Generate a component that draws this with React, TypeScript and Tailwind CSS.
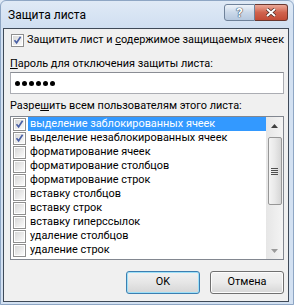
import React from "react";

const items = [
  { t: "выделение заблокированных ячеек", c: true, sel: true },
  { t: "выделение незаблокированных ячеек", c: true },
  { t: "форматирование ячеек" },
  { t: "форматирование столбцов" },
  { t: "форматирование строк" },
  { t: "вставку столбцов" },
  { t: "вставку строк" },
  { t: "вставку гиперссылок" },
  { t: "удаление столбцов" },
  { t: "удаление строк" },
];

function Check({ checked }: { checked?: boolean }) {
  return (
    <div className="w-[13px] h-[13px] border border-[#8f8f8f] bg-white p-[1px] shrink-0">
      <div className="w-full h-full bg-gradient-to-br from-[#d8d8d8] to-[#fafafa] relative">
        {checked && (
          <svg width="9" height="9" viewBox="0 0 9 9" className="absolute left-0 top-0">
            <path d="M1.5 4.2 L3.6 6.8 L7.6 0.8" stroke="#4a60a5" strokeWidth="1.6" fill="none" />
          </svg>
        )}
      </div>
    </div>
  );
}

export default function App() {
  return (
    <div
      className="w-[294px] h-[305px] bg-[#d3e1f2] relative overflow-hidden flex flex-col text-[10.9px] text-black"
      style={{ fontFamily: 'Roboto, "Noto Sans", sans-serif' }}
    >
      <div className="absolute inset-0 border border-[#8ea6c4] rounded-t-[6px] pointer-events-none" />
      {/* title bar */}
      <div className="h-[28px] flex items-start pl-[8px] pr-[6px] pt-[4px] bg-gradient-to-b from-[#e0eaf6] to-[#d0dff1]">
        <div className="flex-1 text-[12px] leading-[18px] pt-[2px]">Защита листа</div>
        <div className="flex">
          <div className="w-[31px] h-[17px] border border-[#6f829a] rounded-l-[3px] bg-gradient-to-b from-[#eef3f9] via-[#cad8e9] to-[#b6c8de] flex items-center justify-center">
            <span
              className="text-[13px] font-bold text-white leading-none"
              style={{ textShadow: "0 0 1px #3a4a60, 0 0 1px #3a4a60, 0 0 1px #3a4a60" }}
            >
              ?
            </span>
          </div>
          <div className="w-[33px] h-[17px] border border-[#6a3830] border-l-0 rounded-r-[3px] bg-gradient-to-b from-[#eaa898] via-[#d0634e] to-[#c24b36] flex items-center justify-center">
            <svg width="12" height="9" viewBox="0 0 12 9">
              <path d="M2 1 L10 8 M10 1 L2 8" stroke="#4a2a24" strokeWidth="3.4" />
              <path d="M2 1 L10 8 M10 1 L2 8" stroke="white" strokeWidth="2" />
            </svg>
          </div>
        </div>
      </div>
      {/* client */}
      <div className="ml-[3px] mr-[5px] mb-[3px] flex-1 border border-[#3f4a58] bg-[#f0f0f0] flex flex-col pl-[6px] pr-[4px]">
        <div className="flex items-center mt-[4px] h-[14px]">
          <div className="ml-[1px]">
            <Check checked />
          </div>
          <span className="ml-[3px] leading-[14px] whitespace-nowrap">
            Защитить лист и <span className="underline">с</span>одержимое защищаемых ячеек
          </span>
        </div>
        <div className="mt-[10px] leading-[14px] h-[14px]">
          <span className="underline">П</span>ароль для отключения защиты листа:
        </div>
        <div className="mt-[1px] h-[22px] border border-[#abadb3] border-t-[#8a8d94] bg-white flex items-center pl-[4px] gap-[2px]">
          {[0, 1, 2, 3, 4, 5].map((i) => (
            <div key={i} className="w-[5px] h-[5px] rounded-full bg-black" />
          ))}
        </div>
        <div className="mt-[5px] leading-[14px] h-[14px]">
          Разре<span className="underline">ш</span>ить всем пользователям этого листа:
        </div>
        <div className="mt-[3px] h-[144px] border border-[#828790] bg-white flex">
          <div className="flex-1 flex flex-col pt-[0px]">
            {items.map((it) => (
              <div key={it.t} className="h-[14px] flex items-center pl-[2px]">
                <Check checked={it.c} />
                <span
                  className={
                    "ml-[2px] flex-1 h-[14px] leading-[14px] pl-[2px] whitespace-nowrap " +
                    (it.sel ? "bg-[#3399ff] text-white" : "")
                  }
                >
                  {it.t}
                </span>
              </div>
            ))}
          </div>
          <div className="w-[17px] bg-gradient-to-r from-[#e6e6e6] to-[#f4f4f4] flex flex-col items-center">
            <div className="h-[17px] flex items-center justify-center">
              <svg width="7" height="4" viewBox="0 0 7 4">
                <path d="M0 4 L3.5 0 L7 4 Z" fill="#404040" />
              </svg>
            </div>
            <div className="mt-[3px] w-[14px] h-[68px] border border-[#979797] rounded-[2px] bg-gradient-to-r from-[#f4f4f4] via-[#e8e8e8] to-[#d6d6d6] flex flex-col items-center justify-center gap-[1px]">
              <div className="w-[7px] h-[1px] bg-[#4f4f4f]" />
              <div className="w-[7px] h-[1px] bg-[#4f4f4f]" />
              <div className="w-[7px] h-[1px] bg-[#4f4f4f]" />
              <div className="w-[7px] h-[1px] bg-[#4f4f4f]" />
            </div>
            <div className="flex-1" />
            <div className="h-[17px] flex items-center justify-center">
              <svg width="7" height="4" viewBox="0 0 7 4">
                <path d="M0 0 L3.5 4 L7 0 Z" fill="#9a9a9a" />
              </svg>
            </div>
          </div>
        </div>
        <div className="mt-[11px] flex justify-end gap-[10px]">
          <div className="w-[74px] h-[23px] rounded-[3px] border border-[#3c7fb1] bg-gradient-to-b from-[#f2f2f2] via-[#e6e6e6] to-[#d6d6d6] flex items-center justify-center shadow-[inset_0_0_0_1px_#9ee0f8]">
            OK
          </div>
          <div className="w-[74px] h-[23px] rounded-[3px] border border-[#707070] bg-gradient-to-b from-[#f2f2f2] via-[#ebebeb] to-[#d6d6d6] flex items-center justify-center shadow-[inset_0_0_0_1px_#fcfcfc]">
            Отмена
          </div>
        </div>
      </div>
    </div>
  );
}
